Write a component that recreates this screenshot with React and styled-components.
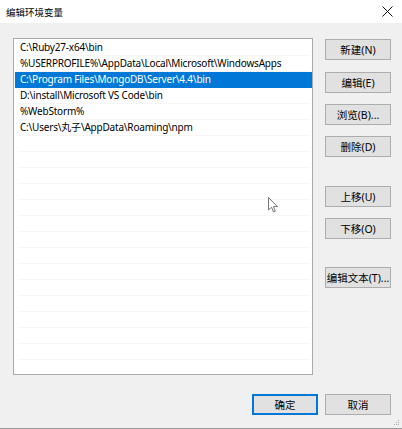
import React from "react";
import styled, { createGlobalStyle } from "styled-components";

const Global = createGlobalStyle`
  html, body { margin: 0; padding: 0; background: #f0f0f0; }
  body { font-family: "Noto Sans", "Noto Sans CJK SC", sans-serif; }
  * { box-sizing: border-box; }
`;

const Window = styled.div`
  position: relative;
  width: 402px;
  height: 429px;
  display: flex;
  flex-direction: column;
  background: #f0f0f0;
  border-bottom: 1px solid #9a9a9a;
  overflow: hidden;
  font-family: "Noto Sans", "Noto Sans CJK SC", sans-serif;
  color: #000;
`;

const TitleBar = styled.div`
  height: 23px;
  flex: none;
  background: #fff;
  display: flex;
  align-items: center;
  justify-content: space-between;
  padding: 0 9px 0 6px;
  font-size: 9.5px;
  font-family: "Noto Sans CJK SC", sans-serif;
`;

const CloseBtn = styled.div`
  width: 12px;
  height: 12px;
  display: flex;
  align-items: center;
  justify-content: center;
`;

const Content = styled.div`
  flex: 1;
  display: flex;
  flex-direction: column;
  padding: 15px 11px 0 13px;
`;

const Main = styled.div`
  display: flex;
  gap: 12px;
`;

const List = styled.div`
  width: 300px;
  height: 337px;
  background: #fff;
  border: 1px solid #a9a9a9;
  padding: 1px 0 0 1px;
  overflow: hidden;
  display: flex;
  flex-direction: column;
`;

const Row = styled.div`
  flex: none;
  height: 16px;
  line-height: 15px;
  font-size: 10px;
  letter-spacing: -0.2px;
  white-space: nowrap;
  overflow: hidden;
  color: ${(p) => (p.$selected ? "#fff" : "#000")};
  background: ${(p) => (p.$selected ? "#0078d7" : "transparent")};
  border-bottom: 1px solid ${(p) => (p.$selected ? "#0078d7" : "#f6f6f6")};
  margin-left: ${(p) => (p.$selected ? "0" : "3px")};
  margin-right: ${(p) => (p.$selected ? "0" : "2px")};
  padding-left: ${(p) => (p.$selected ? "5px" : "2px")};
`;

const Side = styled.div`
  display: flex;
  flex-direction: column;
  padding-top: 1px;
`;

const Button = styled.button`
  width: 66px;
  height: 21px;
  margin-top: ${(p) => p.$gap || 0}px;
  background: #e1e1e1;
  border: ${(p) => (p.$default ? "2px solid #0078d7" : "1px solid #adadad")};
  font-family: "Noto Sans", "Noto Sans CJK SC", sans-serif;
  font-size: 10.5px;
  color: #000;
  padding: 0;
  display: flex;
  align-items: center;
  justify-content: center;
  white-space: nowrap;
`;

const Footer = styled.div`
  display: flex;
  justify-content: flex-end;
  gap: 7px;
  margin-top: 19px;
`;

const Cursor = styled.svg`
  position: absolute;
  left: 268px;
  top: 197px;
`;

const Grip = styled.svg`
  position: absolute;
  right: 2px;
  bottom: 2px;
`;

const paths = [
  "C:\\Ruby27-x64\\bin",
  "%USERPROFILE%\\AppData\\Local\\Microsoft\\WindowsApps",
  "C:\\Program Files\\MongoDB\\Server\\4.4\\bin",
  "D:\\install\\Microsoft VS Code\\bin",
  "%WebStorm%",
  "C:\\Users\\丸子\\AppData\\Roaming\\npm",
];

const buttons = [
  { label: "新建(N)", gap: 0 },
  { label: "编辑(E)", gap: 12 },
  { label: "浏览(B)...", gap: 11 },
  { label: "删除(D)", gap: 11 },
  { label: "上移(U)", gap: 29 },
  { label: "下移(O)", gap: 11 },
  { label: "编辑文本(T)...", gap: 28 },
];

export default function App() {
  const rows = [...paths, ...Array(16).fill("")];
  return (
    <>
      <Global />
      <Window>
        <TitleBar>
          <span>编辑环境变量</span>
          <CloseBtn>
            <svg width="11" height="11" viewBox="0 0 11 11">
              <path d="M0.5 0.5 L10.5 10.5 M10.5 0.5 L0.5 10.5" stroke="#111" strokeWidth="1" />
            </svg>
          </CloseBtn>
        </TitleBar>
        <Content>
          <Main>
            <List>
              {rows.map((r, i) => (
                <Row key={i} $selected={i === 2}>
                  {r}
                </Row>
              ))}
            </List>
            <Side>
              {buttons.map((b) => (
                <Button key={b.label} $gap={b.gap}>
                  {b.label}
                </Button>
              ))}
            </Side>
          </Main>
          <Footer>
            <Button $default>确定</Button>
            <Button>取消</Button>
          </Footer>
        </Content>
        <Cursor width="12" height="17" viewBox="0 0 12 17">
          <path d="M0.5 0.5 L0.5 13 L3.5 10.2 L5.6 15 L7.4 14.2 L5.4 9.6 L9.5 9.6 Z" fill="#fff" stroke="#777" strokeWidth="1" strokeLinejoin="round" />
        </Cursor>
        <Grip width="6" height="6" viewBox="0 0 6 6">
          <rect x="4" y="0" width="1" height="1" fill="#b0b0b0" />
          <rect x="2" y="2" width="1" height="1" fill="#b0b0b0" />
          <rect x="4" y="2" width="1" height="1" fill="#b0b0b0" />
          <rect x="0" y="4" width="1" height="1" fill="#b0b0b0" />
          <rect x="2" y="4" width="1" height="1" fill="#b0b0b0" />
          <rect x="4" y="4" width="1" height="1" fill="#b0b0b0" />
        </Grip>
      </Window>
    </>
  );
}
